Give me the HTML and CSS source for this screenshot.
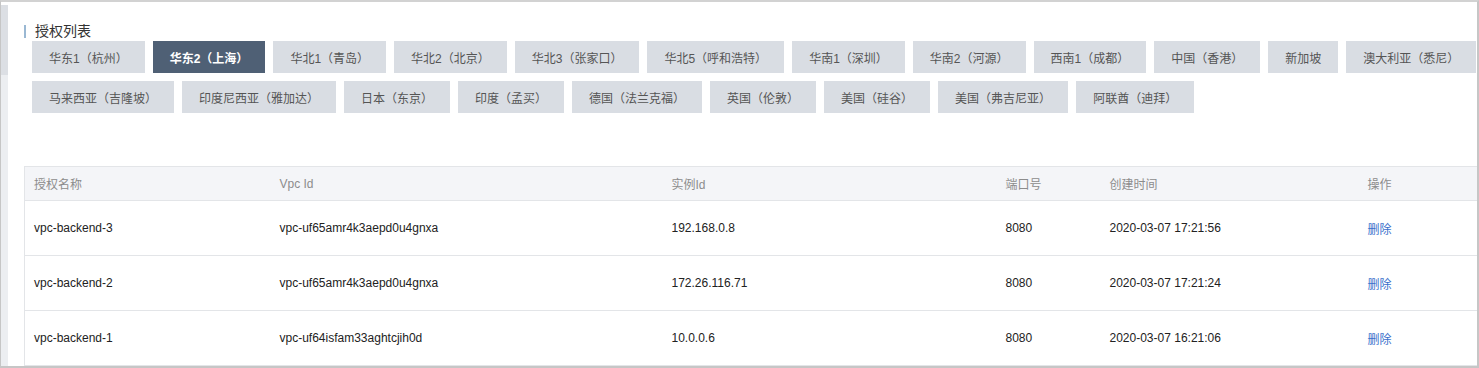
FILE: index.html
```html
<!DOCTYPE html>
<html lang="zh-CN">
<head>
  <meta charset="UTF-8" />
  <title>授权列表</title>
  <link rel="stylesheet" href="styles.css">
</head>
<body>
  <div class="frame">
    <div class="side-strip"></div>
    <div class="main">
      <h3 class="section-title">授权列表</h3>

      <div class="regions">
        <button class="region">华东1（杭州）</button>
        <button class="region active">华东2（上海）</button>
        <button class="region">华北1（青岛）</button>
        <button class="region">华北2（北京）</button>
        <button class="region">华北3（张家口）</button>
        <button class="region">华北5（呼和浩特）</button>
        <button class="region">华南1（深圳）</button>
        <button class="region">华南2（河源）</button>
        <button class="region">西南1（成都）</button>
        <button class="region">中国（香港）</button>
        <button class="region">新加坡</button>
        <button class="region">澳大利亚（悉尼）</button>
        <button class="region">马来西亚（吉隆坡）</button>
        <button class="region">印度尼西亚（雅加达）</button>
        <button class="region">日本（东京）</button>
        <button class="region">印度（孟买）</button>
        <button class="region">德国（法兰克福）</button>
        <button class="region">英国（伦敦）</button>
        <button class="region">美国（硅谷）</button>
        <button class="region">美国（弗吉尼亚）</button>
        <button class="region">阿联酋（迪拜）</button>
      </div>

      <table class="auth-table">
        <colgroup>
          <col class="c-name" />
          <col class="c-vpc" />
          <col class="c-inst" />
          <col class="c-port" />
          <col class="c-time" />
          <col />
        </colgroup>
        <thead>
          <tr>
            <th>授权名称</th>
            <th>Vpc Id</th>
            <th>实例Id</th>
            <th>端口号</th>
            <th>创建时间</th>
            <th>操作</th>
          </tr>
        </thead>
        <tbody>
          <tr>
            <td>vpc-backend-3</td>
            <td>vpc-uf65amr4k3aepd0u4gnxa</td>
            <td>192.168.0.8</td>
            <td>8080</td>
            <td>2020-03-07 17:21:56</td>
            <td><a class="op" href="#">删除</a></td>
          </tr>
          <tr>
            <td>vpc-backend-2</td>
            <td>vpc-uf65amr4k3aepd0u4gnxa</td>
            <td>172.26.116.71</td>
            <td>8080</td>
            <td>2020-03-07 17:21:24</td>
            <td><a class="op" href="#">删除</a></td>
          </tr>
          <tr>
            <td>vpc-backend-1</td>
            <td>vpc-uf64isfam33aghtcjih0d</td>
            <td>10.0.0.6</td>
            <td>8080</td>
            <td>2020-03-07 16:21:06</td>
            <td><a class="op" href="#">删除</a></td>
          </tr>
        </tbody>
      </table>
    </div>
  </div>
</body>
</html>
```
FILE: styles.css
```css
body {
  margin: 0;
  background: #fff;
  font-family: "Liberation Sans", "Noto Sans CJK SC", sans-serif;
  color: #333;
}
.frame {
  display: flex;
  width: 1479px;
  height: 368px;
  box-sizing: border-box;
  border-top: 2px solid #d2d2d2;
  border-left: 1px solid #c6c6c6;
  border-right: 2px solid #c6c6c6;
  border-bottom: 2px solid #c6c6c6;
  overflow: hidden;
}
.side-strip {
  width: 7px;
  flex: none;
  margin-top: 3px;
  background: linear-gradient(#dcdfe4 0, #dcdfe4 70px, #eceef1 70px, #eceef1 100%);
}
.main {
  flex: 1;
  min-width: 0;
  padding-left: 16px;
}
.section-title {
  padding-left: 9px;
  border-left: 2px solid #9ab8d3;
  height: 13px;
  line-height: 13px;
  margin: 23px 0 3px;
  font-size: 14px;
  font-weight: normal;
  color: #333;
}
.regions {
  display: flex;
  flex-wrap: wrap;
  gap: 8px;
  padding-left: 8px;
}
.region {
  flex: none;
  height: 32px;
  padding: 0 17px;
  border: none;
  background: #d9dde3;
  color: #555;
  font-family: inherit;
  font-size: 12px;
  white-space: nowrap;
  cursor: pointer;
}
.region.active {
  background: #4f6075;
  color: #fff;
  font-weight: bold;
}
.auth-table {
  width: 1453px;
  margin-top: 53px;
  border-collapse: collapse;
  table-layout: fixed;
  font-size: 12px;
}
.c-name { width: 246px; }
.c-vpc { width: 392px; }
.c-inst { width: 334px; }
.c-port { width: 104px; }
.c-time { width: 258px; }
.auth-table th {
  height: 33px;
  padding: 0 9px;
  text-align: left;
  font-weight: normal;
  color: #8c8c8c;
  background: #f4f5f8;
  border-top: 1px solid #e3e5e8;
  border-bottom: 1px solid #e3e5e8;
}
.auth-table th:first-child,
.auth-table td:first-child {
  border-left: 1px solid #e3e5e8;
}
.auth-table td {
  height: 54px;
  padding: 0 9px;
  color: #222;
  border-bottom: 1px solid #e3e5e8;
}
.op {
  color: #3b6fcb;
  text-decoration: none;
}
```
